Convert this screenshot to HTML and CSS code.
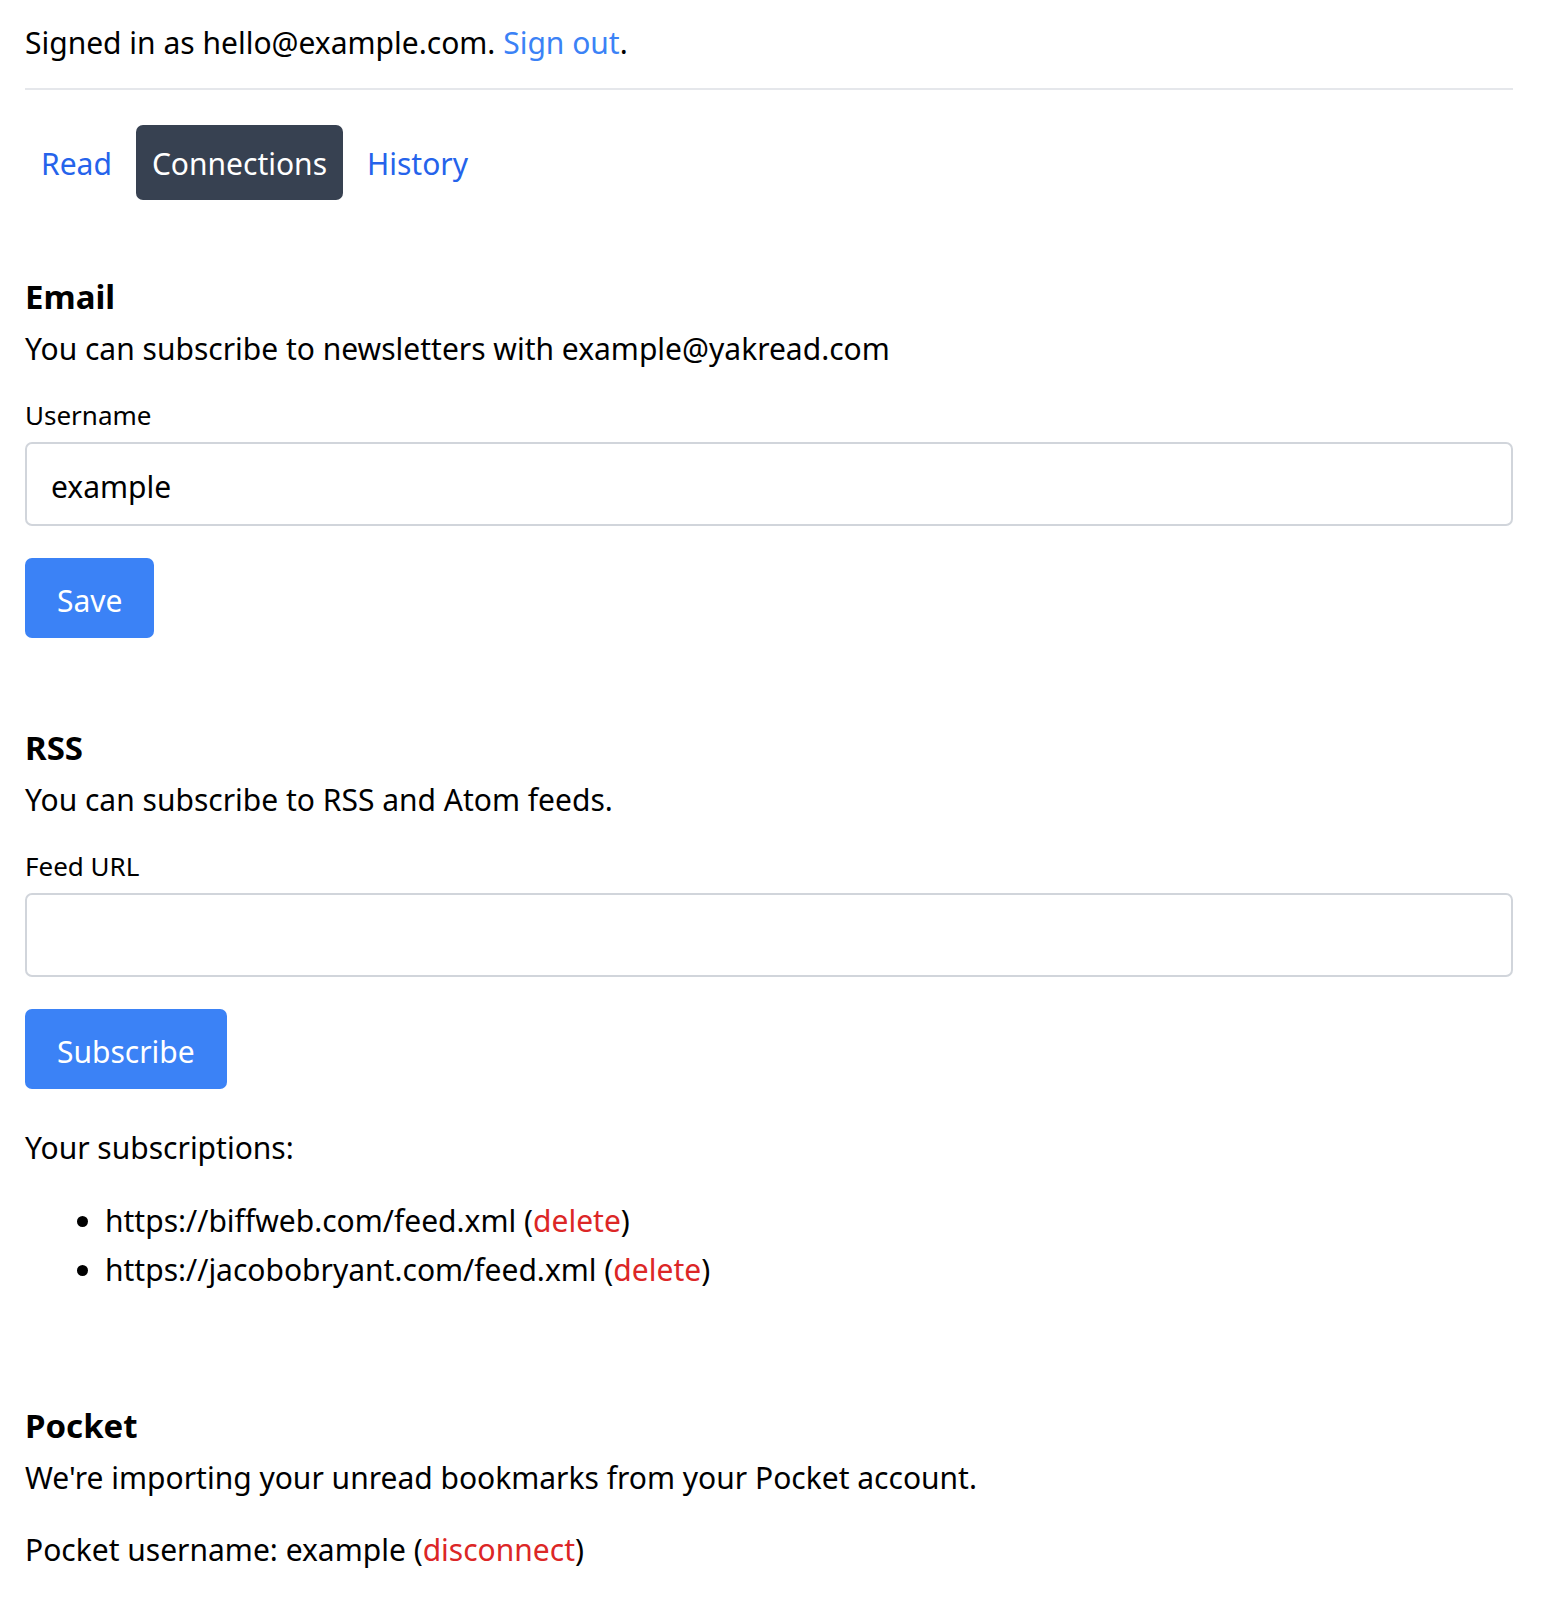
FILE: index.html
```html
<!DOCTYPE html>
<html lang="en">
<head>
<meta charset="utf-8">
<title>Connections</title>
<link rel="stylesheet" href="styles.css">
</head>
<body>
<div class="page">
  <div class="signed">Signed in as hello@example.com. <a class="link" href="#">Sign out</a>.</div>
  <hr class="rule">
  <nav class="tabs">
    <a class="tab" href="#">Read</a>
    <a class="tab active" href="#">Connections</a>
    <a class="tab" href="#">History</a>
  </nav>

  <section class="section section-email">
    <h2 class="heading">Email</h2>
    <p class="desc">You can subscribe to newsletters with example@yakread.com</p>
    <form class="form">
      <label class="label" for="username">Username</label>
      <input class="input" id="username" type="text" value="example">
      <button class="btn" type="button">Save</button>
    </form>
  </section>

  <section class="section section-rss">
    <h2 class="heading">RSS</h2>
    <p class="desc">You can subscribe to RSS and Atom feeds.</p>
    <form class="form">
      <label class="label" for="feed">Feed URL</label>
      <input class="input" id="feed" type="text">
      <button class="btn" type="button">Subscribe</button>
    </form>
    <p class="subs-title">Your subscriptions:</p>
    <ul class="subs">
      <li>https://biffweb.com/feed.xml (<a class="danger" href="#">delete</a>)</li>
      <li>https://jacobobryant.com/feed.xml (<a class="danger" href="#">delete</a>)</li>
    </ul>
  </section>

  <section class="section section-pocket">
    <h2 class="heading">Pocket</h2>
    <p class="desc">We're importing your unread bookmarks from your Pocket account.</p>
    <p class="pocket-user">Pocket username: example (<a class="danger" href="#">disconnect</a>)</p>
  </section>
</div>
</body>
</html>
```

FILE: styles.css
```css
* { box-sizing: border-box; }
html, body { margin: 0; padding: 0; background: #ffffff; }
body {
  font-family: "Noto Sans", "Open Sans", sans-serif;
  color: #000000;
  font-size: 30px;
  line-height: 45px;
}
.page {
  padding: 20px 30px 20px 25px;
}
.signed { margin: 0; }
.link { color: #3b82f6; text-decoration: none; }
.rule {
  border: 0;
  height: 2px;
  background: #e5e7eb;
  margin: 23px 0 0;
}
.tabs {
  display: flex;
  gap: 8px;
  margin-top: 35px;
}
.tab {
  color: #2563eb;
  text-decoration: none;
  font-size: 30px;
  height: 75px;
  line-height: 72px;
  padding: 3px 16px 0;
  border-radius: 7px;
}
.tab.active {
  background: #374151;
  color: #ffffff;
}
.section { margin-top: 74px; }
.section-rss { margin-top: 87px; }
.section-pocket { margin-top: 109px; }
.heading {
  margin: 0;
  font-size: 33px;
  line-height: 45px;
  font-weight: 700;
}
.desc { margin: 7px 0 0; }
.form { display: flex; flex-direction: column; align-items: flex-start; margin-top: 24px; }
.label { font-size: 26px; line-height: 40px; }
.input {
  width: 100%;
  height: 84px;
  margin-top: 7px;
  border: 2px solid #d1d5db;
  border-radius: 7px;
  padding: 5px 24px 0;
  font-family: inherit;
  font-size: 30px;
  color: #000000;
  background: #ffffff;
}
.btn {
  margin-top: 32px;
  height: 80px;
  padding: 5px 32px 0;
  border: 0;
  border-radius: 7px;
  background: #3b82f6;
  color: #ffffff;
  font-family: inherit;
  font-size: 30px;
}
.subs-title { margin: 36px 0 0; }
.subs { margin: 26px 0 0; padding-left: 80px; }
.subs li { line-height: 49px; }
.danger { color: #dc2626; text-decoration: none; }
.pocket-user { margin: 27px 0 0; }
```
